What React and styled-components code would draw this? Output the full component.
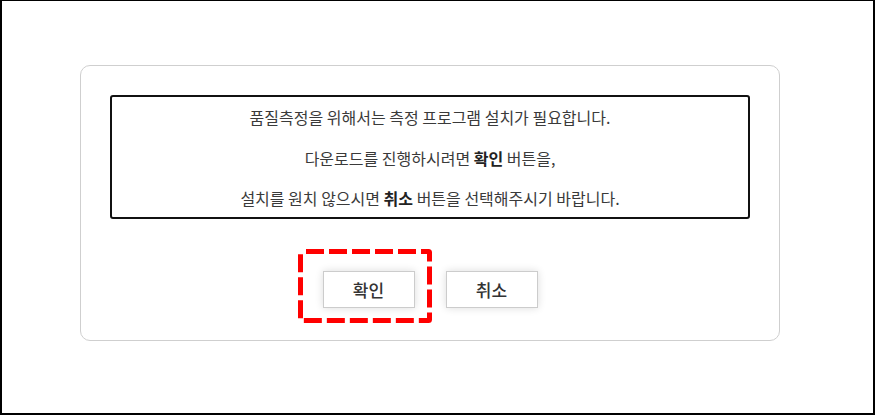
import React from "react";
import styled, { createGlobalStyle } from "styled-components";

const Global = createGlobalStyle`
  html, body { margin: 0; padding: 0; background: #fff; }
  body { font-family: "Noto Sans CJK KR", "Noto Sans", sans-serif; }
  * { box-sizing: border-box; }
`;

const Frame = styled.div`
  width: 875px;
  height: 415px;
  border-style: solid;
  border-color: #000;
  border-width: 1px 2px 2px 2px;
  padding: 64px 0 0 78px;
  background: #fff;
`;

const Card = styled.section`
  width: 700px;
  height: 276px;
  border: 1px solid #cfcfcf;
  border-radius: 10px;
  padding: 29px 29px 32px;
  display: flex;
  flex-direction: column;
  align-items: center;
`;

const Notice = styled.div`
  width: 640px;
  height: 124px;
  border: 2px solid #111;
  border-radius: 3px;
  display: flex;
  flex-direction: column;
  align-items: center;
`;

const Line = styled.p`
  margin: 0;
  height: ${(p) => p.$h || 40}px;
  line-height: ${(p) => p.$h || 40}px;
  font-size: 16px;
  color: #3a3a3a;
  white-space: nowrap;
  b { font-weight: 700; color: #222; }
`;

const ButtonRow = styled.div`
  margin-top: 52px;
  display: flex;
  gap: 31px;
`;

const Wrap = styled.div`
  position: relative;
`;

const Button = styled.button`
  width: 92px;
  height: 37px;
  border: 1px solid #cccccc;
  background: #fff;
  border-radius: 0;
  box-shadow: 0 0 8px rgba(0, 0, 0, 0.14);
  font-family: "Noto Sans CJK KR", "Noto Sans", sans-serif;
  font-size: 17px;
  font-weight: 500;
  color: #333;
  padding: 0;
  cursor: pointer;
`;

const Highlight = styled.svg`
  position: absolute;
  left: -25px;
  top: -22px;
  width: 134px;
  height: 74px;
  pointer-events: none;
  overflow: visible;
`;

export default function App() {
  return (
    <>
      <Global />
      <Frame>
        <Card>
          <Notice>
            <Line $h={41}>품질측정을 위해서는 측정 프로그램 설치가 필요합니다.</Line>
            <Line $h={41}>
              다운로드를 진행하시려면 <b>확인</b> 버튼을,
            </Line>
            <Line $h={38}>
              설치를 원치 않으시면 <b>취소</b> 버튼을 선택해주시기 바랍니다.
            </Line>
          </Notice>
          <ButtonRow>
            <Wrap>
              <Button>확인</Button>
              <Highlight viewBox="0 0 134 74">
                <rect
                  x="2.5"
                  y="2.5"
                  width="129"
                  height="69"
                  rx="1"
                  fill="none"
                  stroke="#ff0000"
                  strokeWidth="5"
                  strokeDasharray="18 5"
                  strokeDashoffset="18.5"
                />
              </Highlight>
            </Wrap>
            <Button>취소</Button>
          </ButtonRow>
        </Card>
      </Frame>
    </>
  );
}
